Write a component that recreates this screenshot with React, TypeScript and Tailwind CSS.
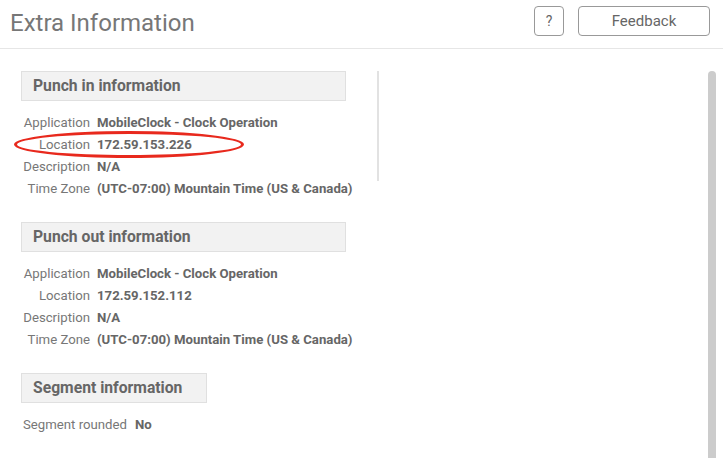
import React from "react";

type Row = { label: string; value: string };

const punchIn: Row[] = [
  { label: "Application", value: "MobileClock - Clock Operation" },
  { label: "Location", value: "172.59.153.226" },
  { label: "Description", value: "N/A" },
  { label: "Time Zone", value: "(UTC-07:00) Mountain Time (US & Canada)" },
];

const punchOut: Row[] = [
  { label: "Application", value: "MobileClock - Clock Operation" },
  { label: "Location", value: "172.59.152.112" },
  { label: "Description", value: "N/A" },
  { label: "Time Zone", value: "(UTC-07:00) Mountain Time (US & Canada)" },
];

function SectionHeader({ title, width }: { title: string; width: string }) {
  return (
    <div
      className={`${width} h-[30px] flex items-center pl-[11px] bg-[#f2f2f2] border border-[#e0e0e0] text-[15.7px] font-bold text-[#666]`}
    >
      {title}
    </div>
  );
}

function InfoRows({ rows }: { rows: Row[] }) {
  return (
    <div className="mt-[11px] flex flex-col">
      {rows.map((r) => (
        <div key={r.label} className="flex h-[22px] items-center text-[13.2px]">
          <div className="w-[69px] shrink-0 text-right text-[#777]">{r.label}</div>
          <div className="pl-[7px] font-bold text-[#666] whitespace-nowrap">{r.value}</div>
        </div>
      ))}
    </div>
  );
}

export default function App() {
  return (
    <div
      className="relative w-[723px] h-[458px] overflow-hidden bg-white"
      style={{ fontFamily: "Roboto, 'Liberation Sans', sans-serif" }}
    >
      {/* HEADER */}
      <header className="h-[49px] flex items-center justify-between border-b border-[#e6e6e6] pl-[10px] pr-[13px]">
        <h1 className="text-[24px] text-[#777] font-normal -mt-[3px]">Extra Information</h1>
        <div className="flex items-center gap-[14px] -mt-[6px]">
          <button className="w-[30px] h-[30px] rounded-[4px] border border-[#999] text-[14px] text-[#666] flex items-center justify-center">
            ?
          </button>
          <button className="w-[132px] h-[30px] rounded-[4px] border border-[#999] text-[15px] text-[#666]">
            Feedback
          </button>
        </div>
      </header>

      {/* BODY */}
      <div className="flex h-[409px] pt-[22px]">
        <div className="w-[325px] ml-[21px] shrink-0">
          <SectionHeader title="Punch in information" width="w-[325px]" />
          <InfoRows rows={punchIn} />

          <div className="mt-[22px]">
            <SectionHeader title="Punch out information" width="w-[325px]" />
            <InfoRows rows={punchOut} />
          </div>

          <div className="mt-[22px]">
            <SectionHeader title="Segment information" width="w-[186px]" />
            <div className="mt-[11px] flex h-[22px] items-center pl-[2px] text-[13.2px]">
              <span className="text-[#777]">Segment rounded</span>
              <span className="pl-[8px] font-bold text-[#666]">No</span>
            </div>
          </div>
        </div>

        <div className="ml-[31px] w-[2px] h-[110px] bg-[#e2e2e2] shrink-0" />

        <div className="flex-1" />

        <div className="w-[8px] mr-[7px] h-full rounded-t-[4px] bg-[#cccccc] shrink-0" />
      </div>

      {/* annotation */}
      <div className="pointer-events-none absolute left-[14px] top-[131px] w-[230px] h-[27px] rounded-[50%] border-[3px] border-[#e8291d]" />
    </div>
  );
}
